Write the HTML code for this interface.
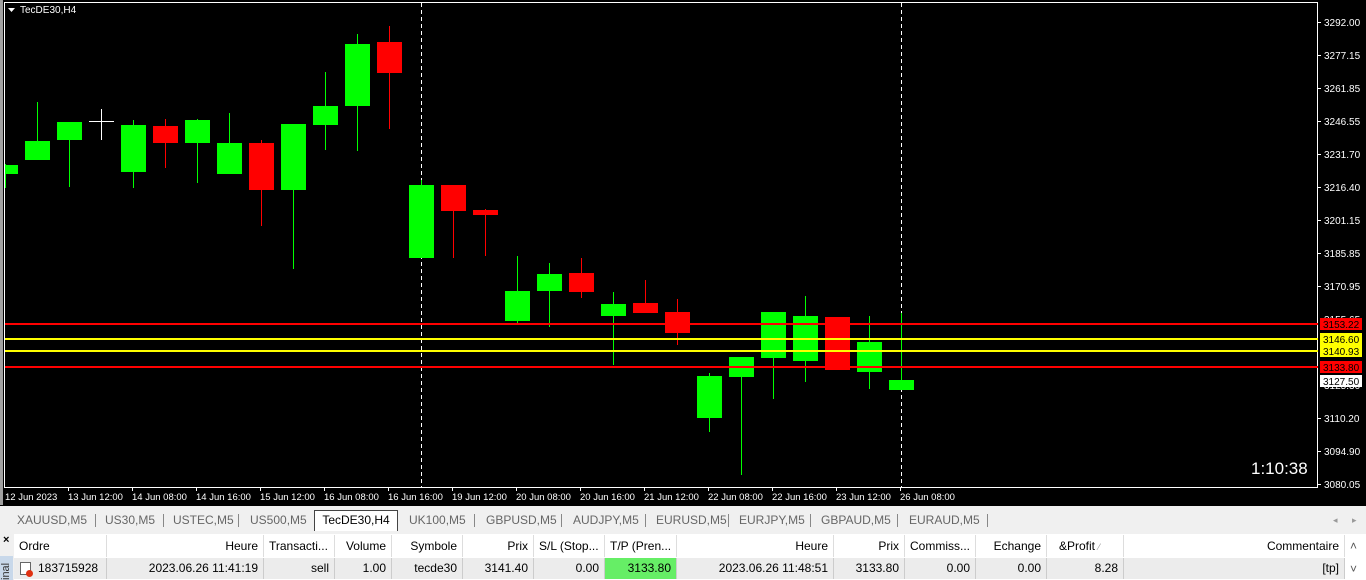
<!DOCTYPE html>
<html><head><meta charset="utf-8"><style>
*{margin:0;padding:0;box-sizing:border-box}
body{width:1366px;height:580px;overflow:hidden;background:#f0f0f0;font-family:"Liberation Sans",sans-serif;position:relative}
svg text{font-family:"Liberation Sans",sans-serif}
.tabs{position:absolute;left:0;top:510px;width:1366px;height:21px;background:#f0f0f0;font-size:12px;color:#666}
.tab{position:absolute;top:3px}
.sep{position:absolute;top:4px;width:1px;height:13px;background:#888}
.act{position:absolute;left:314px;top:0;width:84px;height:21px;background:#fff;border:1px solid #444;border-bottom:none;color:#000;text-align:center;line-height:19px}
.tbl{position:absolute;left:14px;top:534px;width:1352px;height:46px;background:#fff;font-size:12px;color:#000}
.c{position:absolute;height:22px;line-height:22px;padding:0 5px;white-space:nowrap;overflow:hidden}
.h{top:1px;border-right:1px solid #ddd}
.r{top:24px;background:#ececec;border-right:1px solid #ccc;height:21px;line-height:21px}
.ra{text-align:right}
</style></head><body>
<svg width="1366" height="510" style="position:absolute;left:0;top:0">
<rect x="0" y="0" width="1366" height="510" fill="#000"/>
<rect x="0" y="0" width="3" height="510" fill="#a0a0a0"/>
<rect x="0" y="506" width="1366" height="4" fill="#f0f0f0"/>
<rect x="0" y="505" width="1366" height="1" fill="#000"/>
<rect x="4.5" y="2.5" width="1313" height="485" fill="none" stroke="#fff" stroke-width="1"/>
<g stroke="#fff" stroke-width="1" stroke-dasharray="4,3">
<line x1="421.5" y1="3" x2="421.5" y2="487"/><line x1="901.5" y1="3" x2="901.5" y2="487"/></g>
<g stroke-width="1">
<!-- wicks -->
<g stroke="#00ff00">
<line x1="5.5" y1="164" x2="5.5" y2="188"/><line x1="37.5" y1="102" x2="37.5" y2="160"/>
<line x1="69.5" y1="140" x2="69.5" y2="187"/><line x1="133.5" y1="120" x2="133.5" y2="188"/>
<line x1="197.5" y1="119" x2="197.5" y2="183"/><line x1="229.5" y1="113" x2="229.5" y2="174"/>
<line x1="293.5" y1="124" x2="293.5" y2="269"/><line x1="325.5" y1="72" x2="325.5" y2="150"/>
<line x1="357.5" y1="34" x2="357.5" y2="151"/><line x1="421.5" y1="180" x2="421.5" y2="258"/>
<line x1="517.5" y1="256" x2="517.5" y2="323"/><line x1="549.5" y1="263" x2="549.5" y2="327"/>
<line x1="613.5" y1="292" x2="613.5" y2="365"/><line x1="709.5" y1="373" x2="709.5" y2="432"/>
<line x1="741.5" y1="357" x2="741.5" y2="475"/><line x1="773.5" y1="312" x2="773.5" y2="399"/>
<line x1="805.5" y1="296" x2="805.5" y2="382"/><line x1="869.5" y1="316" x2="869.5" y2="389"/>
<line x1="901.5" y1="313" x2="901.5" y2="390"/>
</g>
<g stroke="#ff0000">
<line x1="165.5" y1="119" x2="165.5" y2="168"/><line x1="261.5" y1="140" x2="261.5" y2="226"/>
<line x1="389.5" y1="26" x2="389.5" y2="129"/><line x1="453.5" y1="185" x2="453.5" y2="258"/>
<line x1="485.5" y1="209" x2="485.5" y2="256"/><line x1="581.5" y1="258" x2="581.5" y2="298"/>
<line x1="645.5" y1="280" x2="645.5" y2="313"/><line x1="677.5" y1="299" x2="677.5" y2="345"/>
<line x1="837.5" y1="317" x2="837.5" y2="370"/>
</g>
<g stroke="#fff"><line x1="101.5" y1="109" x2="101.5" y2="140"/><line x1="89" y1="121.5" x2="114" y2="121.5"/></g>
</g>
<g fill="#00ff00">
<rect x="5" y="165" width="13" height="9"/><rect x="25" y="141" width="25" height="19"/>
<rect x="57" y="122" width="25" height="18"/><rect x="121" y="125" width="25" height="47"/>
<rect x="185" y="120" width="25" height="23"/><rect x="217" y="143" width="25" height="31"/>
<rect x="281" y="124" width="25" height="66"/><rect x="313" y="106" width="25" height="19"/>
<rect x="345" y="44" width="25" height="62"/><rect x="409" y="185" width="25" height="73"/>
<rect x="505" y="291" width="25" height="30"/><rect x="537" y="274" width="25" height="17"/>
<rect x="601" y="304" width="25" height="12"/><rect x="697" y="376" width="25" height="42"/>
<rect x="729" y="357" width="25" height="20"/><rect x="761" y="312" width="25" height="46"/>
<rect x="793" y="316" width="25" height="45"/><rect x="857" y="342" width="25" height="30"/>
<rect x="889" y="380" width="25" height="10"/>
</g>
<g fill="#ff0000">
<rect x="153" y="126" width="25" height="17"/><rect x="249" y="143" width="25" height="47"/>
<rect x="377" y="42" width="25" height="31"/><rect x="441" y="185" width="25" height="26"/>
<rect x="473" y="210" width="25" height="5"/><rect x="569" y="273" width="25" height="19"/>
<rect x="633" y="303" width="25" height="10"/><rect x="665" y="312" width="25" height="21"/>
<rect x="825" y="317" width="25" height="53"/>
</g>
<rect x="5" y="323" width="1313" height="2" fill="#ff0000"/>
<rect x="5" y="338" width="1313" height="2" fill="#ffff00"/>
<rect x="5" y="350" width="1313" height="2" fill="#ffff00"/>
<rect x="5" y="366" width="1313" height="2" fill="#ff0000"/>
<g fill="#fff" font-size="10">
<path d="M8 8h7l-3.5 4z" fill="#fff"/>
<text x="20" y="13" font-size="10">TecDE30,H4</text>
<g stroke="#fff"><line x1="1318" y1="22.5" x2="1321" y2="22.5"/><line x1="1318" y1="55.5" x2="1321" y2="55.5"/><line x1="1318" y1="88.5" x2="1321" y2="88.5"/><line x1="1318" y1="121.5" x2="1321" y2="121.5"/><line x1="1318" y1="154.5" x2="1321" y2="154.5"/><line x1="1318" y1="187.5" x2="1321" y2="187.5"/><line x1="1318" y1="220.5" x2="1321" y2="220.5"/><line x1="1318" y1="253.5" x2="1321" y2="253.5"/><line x1="1318" y1="286.5" x2="1321" y2="286.5"/><line x1="1318" y1="418.5" x2="1321" y2="418.5"/><line x1="1318" y1="451.5" x2="1321" y2="451.5"/><line x1="1318" y1="484.5" x2="1321" y2="484.5"/></g>
<text x="1324" y="26">3292.00</text><text x="1324" y="59">3277.15</text><text x="1324" y="92">3261.85</text>
<text x="1324" y="125">3246.55</text><text x="1324" y="158">3231.70</text><text x="1324" y="191">3216.40</text>
<text x="1324" y="224">3201.15</text><text x="1324" y="257">3185.85</text><text x="1324" y="290">3170.95</text>
<text x="1324" y="323">3155.65</text><text x="1324" y="389">3125.30</text>
<text x="1324" y="422">3110.20</text><text x="1324" y="455">3094.90</text><text x="1324" y="488">3080.05</text>
</g>
<rect x="1320" y="318" width="42" height="12" fill="#ff0000"/><text x="1323" y="328" font-size="10" fill="#000">3153.22</text>
<rect x="1320" y="333" width="42" height="12" fill="#ffff00"/><text x="1323" y="343" font-size="10" fill="#000">3146.60</text>
<rect x="1320" y="345" width="42" height="12" fill="#ffff00"/><text x="1323" y="355" font-size="10" fill="#000">3140.93</text>
<rect x="1320" y="361" width="42" height="12" fill="#ff0000"/><text x="1323" y="371" font-size="10" fill="#000">3133.80</text>
<rect x="1320" y="375" width="42" height="12" fill="#fff"/><text x="1323" y="385" font-size="10" fill="#000">3127.50</text>
<text x="1251" y="474" font-size="17" fill="#fff">1:10:38</text>
<g stroke="#fff"><line x1="68.5" y1="487" x2="68.5" y2="491"/><line x1="132.5" y1="487" x2="132.5" y2="491"/><line x1="196.5" y1="487" x2="196.5" y2="491"/><line x1="260.5" y1="487" x2="260.5" y2="491"/><line x1="324.5" y1="487" x2="324.5" y2="491"/><line x1="388.5" y1="487" x2="388.5" y2="491"/><line x1="452.5" y1="487" x2="452.5" y2="491"/><line x1="516.5" y1="487" x2="516.5" y2="491"/><line x1="580.5" y1="487" x2="580.5" y2="491"/><line x1="644.5" y1="487" x2="644.5" y2="491"/><line x1="708.5" y1="487" x2="708.5" y2="491"/><line x1="772.5" y1="487" x2="772.5" y2="491"/><line x1="836.5" y1="487" x2="836.5" y2="491"/><line x1="900.5" y1="487" x2="900.5" y2="491"/></g>
<g fill="#fff" font-size="9.5">
<text x="5" y="500">12 Jun 2023</text><text x="68" y="500">13 Jun 12:00</text><text x="132" y="500">14 Jun 08:00</text>
<text x="196" y="500">14 Jun 16:00</text><text x="260" y="500">15 Jun 12:00</text><text x="324" y="500">16 Jun 08:00</text>
<text x="388" y="500">16 Jun 16:00</text><text x="452" y="500">19 Jun 12:00</text><text x="516" y="500">20 Jun 08:00</text>
<text x="580" y="500">20 Jun 16:00</text><text x="644" y="500">21 Jun 12:00</text><text x="708" y="500">22 Jun 08:00</text>
<text x="772" y="500">22 Jun 16:00</text><text x="836" y="500">23 Jun 12:00</text><text x="900" y="500">26 Jun 08:00</text>
</g>
</svg>
<div class="tabs">
<span class="tab" style="left:17px">XAUUSD,M5</span><div class="sep" style="left:95px"></div>
<span class="tab" style="left:105px">US30,M5</span><div class="sep" style="left:163px"></div>
<span class="tab" style="left:173px">USTEC,M5</span><div class="sep" style="left:238px"></div>
<span class="tab" style="left:250px">US500,M5</span>
<div class="act">TecDE30,H4</div>
<span class="tab" style="left:409px">UK100,M5</span><div class="sep" style="left:474px"></div>
<span class="tab" style="left:486px">GBPUSD,M5</span><div class="sep" style="left:561px"></div>
<span class="tab" style="left:573px">AUDJPY,M5</span><div class="sep" style="left:645px"></div>
<span class="tab" style="left:656px">EURUSD,M5</span><div class="sep" style="left:728px"></div>
<span class="tab" style="left:739px">EURJPY,M5</span><div class="sep" style="left:810px"></div>
<span class="tab" style="left:821px">GBPAUD,M5</span><div class="sep" style="left:897px"></div>
<span class="tab" style="left:909px">EURAUD,M5</span><div class="sep" style="left:987px"></div>
<span class="tab" style="left:1333px;font-size:9px;top:5px;color:#999">◂</span><span class="tab" style="left:1352px;font-size:9px;top:5px;color:#999">▸</span>
</div>
<div style="position:absolute;left:0;top:531px;width:1366px;height:3px;background:#f0f0f0"></div>
<div style="position:absolute;left:0;top:534px;width:14px;height:46px;background:#f0f0f0;font-size:11px;font-weight:bold">
<div style="position:absolute;left:3px;top:0">×</div>
<div style="position:absolute;left:0;top:22px;width:13px;height:24px;background:#c8d8ea;color:#333;font-size:11px;font-weight:normal;writing-mode:vertical-rl;transform:rotate(180deg);line-height:13px">inal</div>
</div>
<div class="tbl">
<div class="c h" style="left:0;width:93px">Ordre</div>
<div class="c h ra" style="left:93px;width:157px">Heure</div>
<div class="c h" style="left:250px;width:71px">Transacti...</div>
<div class="c h ra" style="left:321px;width:57px">Volume</div>
<div class="c h ra" style="left:378px;width:71px">Symbole</div>
<div class="c h ra" style="left:449px;width:71px">Prix</div>
<div class="c h" style="left:520px;width:71px">S/L (Stop...</div>
<div class="c h" style="left:591px;width:72px">T/P (Pren...</div>
<div class="c h ra" style="left:663px;width:157px">Heure</div>
<div class="c h ra" style="left:820px;width:71px">Prix</div>
<div class="c h" style="left:891px;width:71px">Commiss...</div>
<div class="c h ra" style="left:962px;width:71px">Echange</div>
<div class="c h" style="left:1033px;width:77px;padding-left:12px">&amp;Profit <span style="color:#999;font-size:9px">⁄</span></div>
<div class="c h ra" style="left:1110px;width:221px">Commentaire</div>
<div class="c" style="left:1331px;width:21px;top:1px;color:#555">˄</div>
<div class="c r" style="left:0;width:93px;padding-left:24px">183715928<span style="position:absolute;left:6px;top:4px;width:11px;height:13px;border:1px solid #666;background:#fff"></span><span style="position:absolute;left:12px;top:12px;width:7px;height:7px;border-radius:50%;background:#e03010"></span></div>
<div class="c r ra" style="left:93px;width:157px">2023.06.26 11:41:19</div>
<div class="c r ra" style="left:250px;width:71px">sell</div>
<div class="c r ra" style="left:321px;width:57px">1.00</div>
<div class="c r ra" style="left:378px;width:71px">tecde30</div>
<div class="c r ra" style="left:449px;width:71px">3141.40</div>
<div class="c r ra" style="left:520px;width:71px">0.00</div>
<div class="c r ra" style="left:591px;width:72px;background:#66ee66">3133.80</div>
<div class="c r ra" style="left:663px;width:157px">2023.06.26 11:48:51</div>
<div class="c r ra" style="left:820px;width:71px">3133.80</div>
<div class="c r ra" style="left:891px;width:71px">0.00</div>
<div class="c r ra" style="left:962px;width:71px">0.00</div>
<div class="c r ra" style="left:1033px;width:77px">8.28</div>
<div class="c r ra" style="left:1110px;width:221px">[tp]</div>
<div class="c" style="left:1331px;width:21px;top:24px;color:#555">˅</div>
</div>
</body></html>
